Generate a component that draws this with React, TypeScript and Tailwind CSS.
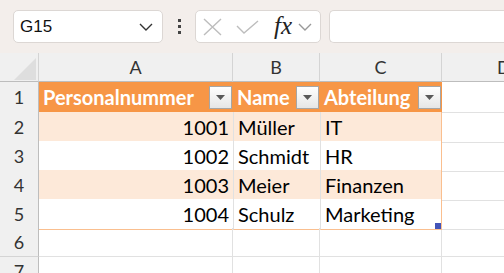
import React from "react";

type Row = {
  nr: string;
  name: string;
  abt: string;
};

const rows: Row[] = [
  { nr: "1001", name: "Müller", abt: "IT" },
  { nr: "1002", name: "Schmidt", abt: "HR" },
  { nr: "1003", name: "Meier", abt: "Finanzen" },
  { nr: "1004", name: "Schulz", abt: "Marketing" },
];

const FilterButton = () => (
  <div className="w-[23px] h-[23px] shrink-0 border border-[#a6a6a6] bg-gradient-to-b from-white to-[#e6e6e6] flex items-center justify-center">
    <svg width="9" height="5" viewBox="0 0 9 5">
      <path d="M0 0 H9 L4.5 5 Z" fill="#595959" />
    </svg>
  </div>
);

const Chevron = ({ color = "#333" }: { color?: string }) => (
  <svg width="14" height="8" viewBox="0 0 14 8" fill="none">
    <path d="M1 1 L7 7 L13 1" stroke={color} strokeWidth="1.4" />
  </svg>
);

const App = () => {
  const font = "font-['Lato','Noto_Sans',sans-serif]";
  return (
    <div className={`w-[504px] h-[273px] overflow-hidden bg-white ${font}`}>
      {/* toolbar */}
      <div className="h-[53px] bg-[#f3eeeb] flex items-start pt-[10px] pl-[13px]">
        <div className="w-[150px] h-[33px] bg-white border border-[#dcd7d4] rounded-[5px] flex items-center justify-between pl-[6px] pr-[9px]">
          <span className="text-[17px] text-[#111] font-['Liberation_Sans',sans-serif]">G15</span>
          <Chevron />
        </div>
        <div className="w-[32px] h-[33px] flex flex-col items-center justify-center gap-[3px]">
          <div className="w-[3px] h-[3px] bg-[#444]" />
          <div className="w-[3px] h-[3px] bg-[#444]" />
          <div className="w-[3px] h-[3px] bg-[#444]" />
        </div>
        <div className="w-[126px] h-[33px] bg-white border border-[#dcd7d4] rounded-[5px] flex items-center pl-[7px] pr-[3px]">
          <svg width="19" height="18" viewBox="0 0 19 18" fill="none">
            <path d="M1 1 L18 17 M18 1 L1 17" stroke="#bdbdbd" strokeWidth="1.4" />
          </svg>
          <svg width="23" height="14" viewBox="0 0 23 14" fill="none" className="ml-[14px]">
            <path d="M1 6 L8 13 L22 1" stroke="#bdbdbd" strokeWidth="1.4" />
          </svg>
          <span className="ml-[15px] text-[25px] italic leading-none text-[#222] font-['Liberation_Serif',serif] -mt-[2px]">fx</span>
          <div className="ml-[6px]">
            <Chevron color="#999" />
          </div>
        </div>
        <div className="ml-[8px] flex-1 h-[33px] bg-white border border-[#dcd7d4] border-r-0 rounded-l-[5px]" />
      </div>

      {/* column headers */}
      <div className="grid grid-cols-[39px_194px_87px_122px_1fr] h-[29px] bg-[#f0f0f0] text-[18px] text-[#333]">
        <div className="relative border-r border-[#d4d4d4] border-b border-b-[#bdbdbd] overflow-hidden">
          <svg width="22" height="22" viewBox="0 0 22 22" className="absolute left-[14px] top-[5px]">
            <path d="M22 0 V22 H0 Z" fill="#dedede" />
          </svg>
        </div>
        <div className="flex items-center justify-center border-r border-[#d4d4d4] border-b border-b-[#bdbdbd]">A</div>
        <div className="flex items-center justify-center border-r border-[#d4d4d4] border-b border-b-[#bdbdbd]">B</div>
        <div className="flex items-center justify-center border-r border-[#d4d4d4] border-b border-b-[#bdbdbd]">C</div>
        <div className="flex items-center border-b border-b-[#bdbdbd] pl-[55px]">D</div>
      </div>

      {/* row 1: table header */}
      <div className="grid grid-cols-[39px_194px_87px_122px_1fr] h-[30px] text-[20px]">
        <div className="bg-[#f0f0f0] border-r border-[#bdbdbd] border-b border-b-[#d4d4d4] flex items-center justify-center text-[#333] text-[18px]">1</div>
        <div className="bg-[#f79646] border-b border-[#f79646] flex items-center justify-between pl-[4px] pr-[1px] text-white font-bold">
          <span>Personalnummer</span>
          <FilterButton />
        </div>
        <div className="bg-[#f79646] border-b border-[#f79646] flex items-center justify-between pl-[4px] pr-[1px] text-white font-bold">
          <span>Name</span>
          <FilterButton />
        </div>
        <div className="bg-[#f79646] border-b border-[#f79646] flex items-center justify-between pl-[4px] pr-[1px] text-white font-bold">
          <span>Abteilung</span>
          <FilterButton />
        </div>
        <div className="border-b border-[#e1e1e1]" />
      </div>

      {rows.map((r, i) => {
        const band = i % 2 === 0 ? "bg-[#fde9d9]" : "bg-white";
        const last = i === rows.length - 1;
        return (
          <div key={r.nr} className="grid grid-cols-[39px_194px_87px_122px_1fr] h-[29px] text-[20px] text-black">
            <div className="bg-[#f0f0f0] border-r border-[#bdbdbd] border-b border-b-[#d4d4d4] flex items-center justify-center text-[#333] text-[18px]">
              {i + 2}
            </div>
            <div className={`${band} border-b border-[#fabf8f] flex items-center justify-end pr-[4px]`}>{r.nr}</div>
            <div className={`${band} border-b border-l border-[#fabf8f] border-l-[#e1e1e1] flex items-center pl-[4px]`}>{r.name}</div>
            <div className={`${band} relative border-b border-l border-r border-[#fabf8f] border-l-[#e1e1e1] flex items-center pl-[4px]`}>
              {r.abt}
              {last && <div className="absolute right-0 bottom-0 w-[6px] h-[6px] bg-[#4354b8]" />}
            </div>
            <div className="border-b border-[#e1e1e1]" />
          </div>
        );
      })}

      {[6, 7].map((n) => (
        <div key={n} className="grid grid-cols-[39px_194px_87px_122px_1fr] h-[29px] text-[18px]">
          <div className="bg-[#f0f0f0] border-r border-[#bdbdbd] border-b border-b-[#d4d4d4] flex items-center justify-center text-[#333]">
            {n}
          </div>
          <div className="border-b border-r border-[#e1e1e1]" />
          <div className="border-b border-r border-[#e1e1e1]" />
          <div className="border-b border-r border-[#e1e1e1]" />
          <div className="border-b border-[#e1e1e1]" />
        </div>
      ))}
    </div>
  );
};

export default App;
